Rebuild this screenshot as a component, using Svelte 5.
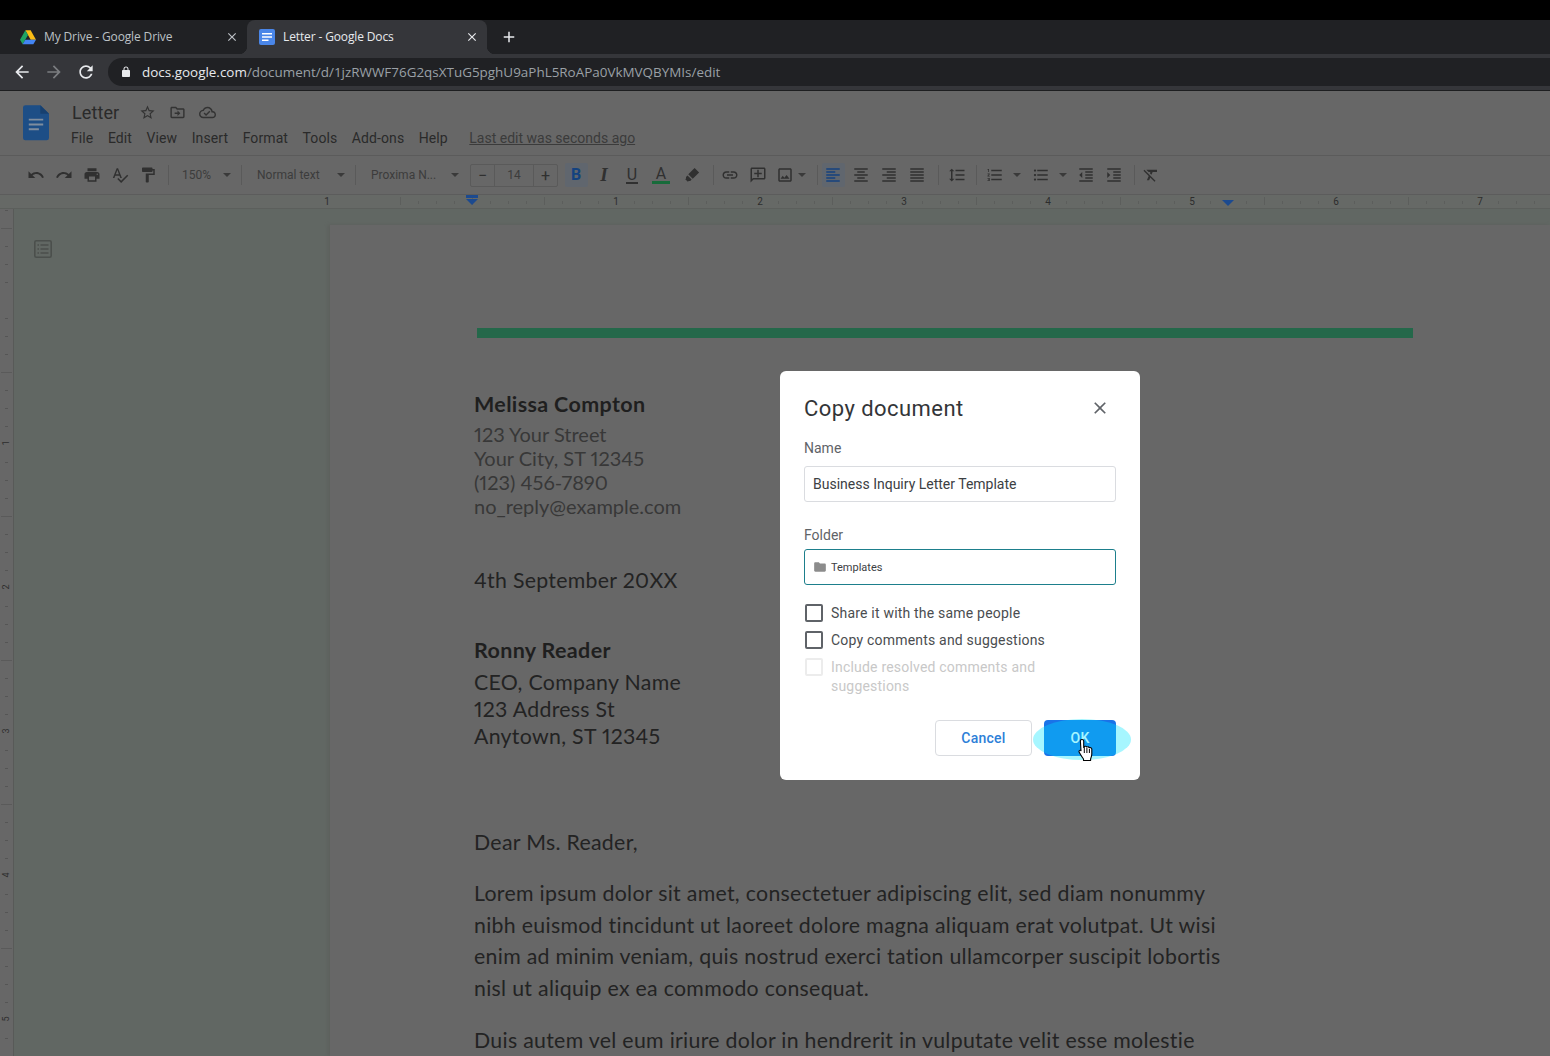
<script lang="ts">
	const icons: Record<string, string> = {
		undo: 'M12.5 8c-2.65 0-5.05.99-6.9 2.6L2 7v9h9l-3.62-3.62c1.39-1.16 3.16-1.88 5.12-1.88 3.54 0 6.55 2.31 7.6 5.5l2.37-.78C21.08 11.03 17.15 8 12.5 8z',
		redo: 'M18.4 10.6C16.55 8.99 14.15 8 11.5 8c-4.65 0-8.58 3.03-9.96 7.22L3.9 16c1.05-3.19 4.05-5.5 7.6-5.5 1.95 0 3.73.72 5.12 1.88L13 16h9V7l-3.6 3.6z',
		print: 'M19 8H5c-1.66 0-3 1.34-3 3v6h4v4h12v-4h4v-6c0-1.66-1.34-3-3-3zm-3 11H8v-5h8v5zm3-7c-.55 0-1-.45-1-1s.45-1 1-1 1 .45 1 1-.45 1-1 1zm-1-9H6v4h12V3z',
		spell: 'M12.45 16h2.09L9.43 3H7.57L2.46 16h2.09l1.12-3h5.64l1.14 3zm-6.02-5L8.5 5.48 10.57 11H6.43zm15.16.59l-8.09 8.09L9.83 16l-1.41 1.41 5.09 5.09L23 13l-1.41-1.41z',
		paint: 'M18 4V3c0-.55-.45-1-1-1H5c-.55 0-1 .45-1 1v4c0 .55.45 1 1 1h12c.55 0 1-.45 1-1V6h1v4H9v11c0 .55.45 1 1 1h2c.55 0 1-.45 1-1v-9h8V4h-3z',
		pen: 'M15.5 2.500l6 6-8.500 8.500-6-6zM6 12.500l5.500 5.500-2 2H7.500l-1 1-3.500-3.500 1-1V14.500z',
		link: 'M3.9 12c0-1.71 1.39-3.1 3.1-3.1h4V7H7c-2.76 0-5 2.24-5 5s2.24 5 5 5h4v-1.9H7c-1.71 0-3.1-1.39-3.1-3.1zM8 13h8v-2H8v2zm9-6h-4v1.9h4c1.71 0 3.1 1.39 3.1 3.1s-1.39 3.1-3.1 3.1h-4V17h4c2.76 0 5-2.24 5-5s-2.24-5-5-5z',
		comment: 'M2 4c0-1.1.9-2 2-2h16c1.1 0 2 .9 2 2v12c0 1.1-.9 2-2 2H6l-4 4V4zm2 13.17L5.17 16H20V4H4v13.17zM11 5h2v4h4v2h-4v4h-2v-4H7V9h4z',
		image: 'M19 5v14H5V5h14m0-2H5c-1.1 0-2 .9-2 2v14c0 1.1.9 2 2 2h14c1.1 0 2-.9 2-2V5c0-1.1-.9-2-2-2zm-4.86 8.86l-3 3.87L9 13.14 6 17h12l-3.86-5.14z',
		left: 'M3 3h18v2H3zM3 7h12v2H3zM3 11h18v2H3zM3 15h12v2H3zM3 19h18v2H3z',
		center: 'M3 3h18v2H3zM7 7h10v2H7zM3 11h18v2H3zM7 15h10v2H7zM3 19h18v2H3z',
		right: 'M3 3h18v2H3zM9 7h12v2H9zM3 11h18v2H3zM9 15h12v2H9zM3 19h18v2H3z',
		justify: 'M3 3h18v2H3zM3 7h18v2H3zM3 11h18v2H3zM3 15h18v2H3zM3 19h18v2H3z',
		spacing: 'M6 7h2.5L5 3.5 1.5 7H4v10H1.5L5 20.5 8.5 17H6V7zm4-2v2h12V5H10zm0 14h12v-2H10v2zm0-6h12v-2H10v2z',
		numbered: 'M2 17h2v.5H3v1h1v.5H2v1h3v-4H2v1zm1-9h1V4H2v1h1v3zm-1 3h1.8L2 13.1v.9h3v-1H3.2L5 10.9V10H2v1zm5-6v2h14V5H7zm0 14h14v-2H7v2zm0-6h14v-2H7v2z',
		bullets: 'M4 10.5c-.83 0-1.5.67-1.5 1.5s.67 1.5 1.5 1.5 1.5-.67 1.5-1.5-.67-1.5-1.5-1.5zm0-6c-.83 0-1.5.67-1.5 1.5S3.17 7.5 4 7.5 5.5 6.83 5.5 6 4.83 4.5 4 4.5zm0 12c-.83 0-1.5.68-1.5 1.5s.68 1.5 1.5 1.5 1.5-.68 1.5-1.5-.67-1.5-1.5-1.5zM7 19h14v-2H7v2zm0-6h14v-2H7v2zm0-8v2h14V5H7z',
		outdent: 'M11 17h10v-2H11v2zm-8-5l4 4V8l-4 4zm0 9h18v-2H3v2zM3 3v2h18V3H3zm8 6h10V7H11v2zm0 4h10v-2H11v2z',
		indent: 'M3 21h18v-2H3v2zM3 8v8l4-4-4-4zm8 9h10v-2H11v2zM3 3v2h18V3H3zm8 6h10V7H11v2zm0 4h10v-2H11v2z',
		clear: 'M3.27 5L2 6.27l6.97 6.97L6.5 19h3l1.57-3.66L16.73 21 18 19.73 3.55 5.27 3.27 5zM6 5v.18L8.82 8h2.4l-.72 1.68 2.1 2.1L14.21 8H20V5H6z',
		star: 'M22 9.24l-7.19-.62L12 2 9.19 8.63 2 9.24l5.46 4.73L5.82 21 12 17.27 18.18 21l-1.63-7.03L22 9.24zM12 15.4l-3.76 2.27 1-4.28-3.32-2.88 4.38-.38L12 6.1l1.71 4.04 4.38.38-3.32 2.88 1 4.28L12 15.4z',
		move: 'M20 6h-8l-2-2H4c-1.1 0-1.99.9-1.99 2L2 18c0 1.1.9 2 2 2h16c1.1 0 2-.9 2-2V8c0-1.1-.9-2-2-2zm0 12H4V6h5.17l2 2H20v10zm-8-4H8v-2h4V9l4 4-4 4v-3z',
		cloud: 'M19.35 10.04C18.67 6.59 15.64 4 12 4 9.11 4 6.6 5.64 5.35 8.04 2.34 8.36 0 10.91 0 14c0 3.31 2.69 6 6 6h13c2.76 0 5-2.24 5-5 0-2.64-2.05-4.78-4.65-4.96zM19 18H6c-2.21 0-4-1.79-4-4s1.79-4 4-4h.71C7.37 7.69 9.48 6 12 6c3.04 0 5.5 2.46 5.5 5.5v.5H19c1.66 0 3 1.34 3 3s-1.34 3-3 3zm-9-3.82l-2.09-2.09L6.5 13.5 10 17l6.01-6.01-1.41-1.41z',
		back: 'M20 11H7.83l5.59-5.59L12 4l-8 8 8 8 1.41-1.41L7.83 13H20v-2z',
		forward: 'M12 4l-1.41 1.41L16.17 11H4v2h12.17l-5.58 5.59L12 20l8-8z',
		refresh: 'M17.65 6.35C16.2 4.9 14.21 4 12 4c-4.42 0-7.99 3.58-7.99 8s3.57 8 7.99 8c3.73 0 6.84-2.55 7.73-6h-2.08c-.82 2.33-3.04 4-5.65 4-3.31 0-6-2.69-6-6s2.69-6 6-6c1.66 0 3.14.69 4.22 1.78L13 11h7V4l-2.35 2.35z',
		lock: 'M18 8h-1V6c0-2.76-2.24-5-5-5S7 3.24 7 6v2H6c-1.1 0-2 .9-2 2v10c0 1.1.9 2 2 2h12c1.1 0 2-.9 2-2V10c0-1.1-.9-2-2-2zM9 6c0-1.66 1.34-3 3-3s3 1.34 3 3v2H9V6z',
		close: 'M19 6.41L17.59 5 12 10.59 6.41 5 5 6.41 10.59 12 5 17.59 6.41 19 12 13.41 17.59 19 19 17.59 13.41 12z',
		plus: 'M19 13h-6v6h-2v-6H5v-2h6V5h2v6h6v2z',
		folder: 'M10 4H4c-1.1 0-2 .9-2 2v12c0 1.1.9 2 2 2h16c1.1 0 2-.9 2-2V8c0-1.1-.9-2-2-2h-8l-2-2z'
	};

	const menus = ['File', 'Edit', 'View', 'Insert', 'Format', 'Tools', 'Add-ons', 'Help'];

	type Tool = {
		type: 'icon' | 'sep' | 'select' | 'caret' | 'size' | 'letter';
		name?: string;
		label?: string;
		w?: number;
		ml?: number;
		pl?: number;
		pr?: number;
		active?: boolean;
	};

	const tools: Tool[] = [
		{ type: 'icon', name: 'undo' },
		{ type: 'icon', name: 'redo' },
		{ type: 'icon', name: 'print' },
		{ type: 'icon', name: 'spell' },
		{ type: 'icon', name: 'paint' },
		{ type: 'sep', ml: 6 },
		{ type: 'select', label: '150%', w: 72, pl: 13, pr: 10 },
		{ type: 'sep' },
		{ type: 'select', label: 'Normal text', w: 113, pl: 15, pr: 10 },
		{ type: 'sep' },
		{ type: 'select', label: 'Proxima N...', w: 111, pl: 15, pr: 8 },
		{ type: 'size', ml: 3 },
		{ type: 'letter', name: 'bold', label: 'B', ml: 4, active: true },
		{ type: 'letter', name: 'italic', label: 'I' },
		{ type: 'letter', name: 'under', label: 'U' },
		{ type: 'letter', name: 'color', label: 'A', ml: 1 },
		{ type: 'icon', name: 'pen', ml: 3 },
		{ type: 'sep', ml: 7 },
		{ type: 'icon', name: 'link', ml: 2 },
		{ type: 'icon', name: 'comment' },
		{ type: 'icon', name: 'image', w: 26 },
		{ type: 'caret', w: 10, ml: -1 },
		{ type: 'sep', ml: 10 },
		{ type: 'icon', name: 'left', ml: 1, active: true },
		{ type: 'icon', name: 'center' },
		{ type: 'icon', name: 'right' },
		{ type: 'icon', name: 'justify' },
		{ type: 'sep', ml: 7 },
		{ type: 'icon', name: 'spacing', ml: 4 },
		{ type: 'sep', ml: 5 },
		{ type: 'icon', name: 'numbered', ml: 4 },
		{ type: 'caret', w: 12, ml: 2 },
		{ type: 'icon', name: 'bullets', ml: 4 },
		{ type: 'caret', w: 12, ml: 2 },
		{ type: 'icon', name: 'outdent', ml: 3 },
		{ type: 'icon', name: 'indent' },
		{ type: 'sep', ml: 6 },
		{ type: 'icon', name: 'clear', ml: 2 }
	];

	// ruler marks: one inch is 144px, tick every eighth, zero of the horizontal ruler at x=472
	const hTicks = Array.from({ length: 70 }, (_, i) => i - 4)
		.map((i) => ({ x: 472 + i * 18, major: i % 4 === 0 }))
		.filter((t) => (t.x - 472) % 144 !== 0 || t.x === 472);
	const hNums = [
		{ n: 1, x: 327 },
		{ n: 1, x: 616 },
		{ n: 2, x: 760 },
		{ n: 3, x: 904 },
		{ n: 4, x: 1048 },
		{ n: 5, x: 1192 },
		{ n: 6, x: 1336 },
		{ n: 7, x: 1480 }
	];
	// the vertical ruler: long tick at every half inch between the numbers
	const vTicks = Array.from({ length: 47 }, (_, i) => ({ y: 1 + i * 18, major: i % 8 === 1 })).filter(
		(_, i) => i % 8 !== 5
	);
	const vNums = [1, 2, 3, 4, 5].map((n) => ({ n, y: 229 + (n - 1) * 144 }));
</script>

{#snippet icon(name: string, size = 18)}
	<svg width={size} height={size} viewBox="0 0 24 24" fill="currentColor"><path d={icons[name]} /></svg>
{/snippet}

<div class="screen">
	<div class="tabstrip">
		<div class="tab">
			<svg class="favicon" width="16" height="16" viewBox="0 0 24 24">
				<path d="M8 2h8l8 14h-8z" fill="#f9bc15" />
				<path d="M8 2L0 16l4 7 8-14z" fill="#1fa463" />
				<path d="M4 23h16l4-7H8z" fill="#4385f4" />
			</svg>
			<span class="tab-title">My Drive - Google Drive</span>
			{@render icon('close', 14)}
		</div>
		<div class="tab active">
			<svg class="favicon" width="16" height="16" viewBox="0 0 16 16">
				<rect width="16" height="16" rx="2" fill="#4a86e8" />
				<path d="M3 4h10v1.6H3zM3 7.2h10v1.6H3zM3 10.4h6.5V12H3z" fill="#fff" />
			</svg>
			<span class="tab-title">Letter - Google Docs</span>
			{@render icon('close', 14)}
		</div>
		<div class="newtab">{@render icon('plus', 18)}</div>
	</div>

	<div class="navbar">
		<span class="nav">{@render icon('back', 20)}</span>
		<span class="nav off">{@render icon('forward', 20)}</span>
		<span class="nav">{@render icon('refresh', 20)}</span>
		<div class="omnibox">
			<span class="lock">{@render icon('lock', 12)}</span>
			<span class="host">docs.google.com</span><span class="path">/document/d/1jzRWWF76G2qsXTuG5pghU9aPhL5RoAPa0VkMVQBYMIs/edit</span>
		</div>
	</div>

	<header class="docs-head">
		<svg class="docs-logo" width="26" height="36" viewBox="0 0 27 37">
			<path d="M2.5 0H18l9 9v25a2.5 2.5 0 0 1-2.5 2.5h-22A2.5 2.5 0 0 1 0 34V2.5A2.5 2.5 0 0 1 2.5 0z" fill="#1d4e86" />
			<path d="M18 0l9 9h-9z" fill="#17406f" />
			<path d="M6 14h15v2H6zM6 19h15v2H6zM6 24h10.500v2H6z" fill="#7f8d9e" />
		</svg>
		<div class="head-main">
			<div class="title-row">
				<span class="doc-title">Letter</span>
				<span class="title-icons">
					{@render icon('star', 17)}
					{@render icon('move', 17)}
					{@render icon('cloud', 17)}
				</span>
			</div>
			<div class="menu-row">
				{#each menus as menu}
					<span>{menu}</span>
				{/each}
				<span class="last-edit">Last edit was seconds ago</span>
			</div>
		</div>
	</header>

	<div class="toolbar">
		{#each tools as t}
			{#if t.type === 'sep'}
				<span class="sep" style:margin-left="{t.ml ?? 0}px"></span>
			{:else if t.type === 'select'}
				<span class="select" style:width="{t.w}px" style:padding-left="{t.pl}px" style:padding-right="{t.pr}px">
					<span>{t.label}</span><i class="caret"></i>
				</span>
			{:else if t.type === 'caret'}
				<span class="tool" style:width="{t.w}px" style:margin-left="{t.ml}px"><i class="caret"></i></span>
			{:else if t.type === 'size'}
				<span class="size" style:margin-left="{t.ml}px">
					<span class="size-btn">&minus;</span>
					<span class="size-val">14</span>
					<span class="size-btn">+</span>
				</span>
			{:else if t.type === 'letter'}
				<span class="tool" class:on={t.active} style:margin-left="{t.ml ?? 0}px">
					<span class="letter {t.name}">{t.label}</span>
				</span>
			{:else}
				<span class="tool" class:on={t.active} style:width="{t.w ?? 28}px" style:margin-left="{t.ml ?? 0}px">
					{@render icon(t.name ?? '')}
				</span>
			{/if}
		{/each}
	</div>

	<div class="hruler">
		{#each hTicks as t}
			<i class="htick" class:major={t.major} style:left="{t.x}px"></i>
		{/each}
		{#each hNums as t}
			<span class="hnum" style:left="{t.x}px">{t.n}</span>
		{/each}
		<i class="marker left-mark"></i>
		<i class="marker right-mark"></i>
	</div>

	<div class="workspace">
		<div class="vruler">
			{#each vTicks as t}
				<i class="vtick" class:major={t.major} style:top="{t.y}px"></i>
			{/each}
			{#each vNums as t}
				<span class="vnum" style:top="{t.y}px">{t.n}</span>
			{/each}
		</div>
		<div class="canvas">
			<aside class="outline-gutter">
				<svg width="20" height="20" viewBox="0 0 20 20" fill="none" stroke="#4b4f4c">
					<rect x="1.800" y="1.800" width="16.400" height="16.400" rx="1.500" stroke-width="1.600" />
					<path d="M4.500 6h1.500M7.500 6h8M4.500 10h1.500M7.500 10h8M4.500 14h1.500M7.500 14h8" stroke-width="1.500" />
				</svg>
			</aside>
			<main class="page">
				<div class="rule"></div>
				<h2 class="sender">Melissa Compton</h2>
				<p class="address">123 Your Street<br />Your City, ST 12345<br />(123) 456-7890<br />no_reply@example.com</p>
				<p class="date">4th September 20XX</p>
				<h2 class="recipient">Ronny Reader</h2>
				<p class="rcpt-lines">CEO, Company Name<br />123 Address St<br />Anytown, ST 12345</p>
				<p class="salute">Dear Ms. Reader,</p>
				<p class="body-text">Lorem ipsum dolor sit amet, consectetuer adipiscing elit, sed diam nonummy<br />nibh euismod tincidunt ut laoreet dolore magna aliquam erat volutpat. Ut wisi<br />enim ad minim veniam, quis nostrud exerci tation ullamcorper suscipit lobortis<br />nisl ut aliquip ex ea commodo consequat.</p>
				<p class="body-text">Duis autem vel eum iriure dolor in hendrerit in vulputate velit esse molestie</p>
			</main>
		</div>
	</div>

	<div class="dialog">
		<div class="dialog-head">
			<h1>Copy document</h1>
			<span class="dialog-close">{@render icon('close', 20)}</span>
		</div>
		<label class="field-label" for="copy-name">Name</label>
		<input id="copy-name" class="field" value="Business Inquiry Letter Template" />
		<div class="field-label folder-label">Folder</div>
		<div class="field folder">
			<span class="folder-icon">{@render icon('folder', 14)}</span>
			<span>Templates</span>
		</div>
		<div class="check first"><i class="box"></i><span>Share it with the same people</span></div>
		<div class="check"><i class="box"></i><span>Copy comments and suggestions</span></div>
		<div class="check disabled"><i class="box"></i><span>Include resolved comments and suggestions</span></div>
		<div class="actions">
			<button class="btn cancel">Cancel</button>
			<button class="btn ok">OK</button>
		</div>
		<div class="click-glow"></div>
		<svg class="hand" width="18" height="23" viewBox="0 0 18 23">
			<path d="M5 1.500c1 0 1.700.7 1.700 1.700v6.300l.6-.1V8.500c1-.6 2.200-.3 2.500.6.900-.6 2.200-.3 2.500.7 1-.5 2.400 0 2.500 1.200v5c0 2-.5 3.300-1.200 5v1.500H6.500V21c-1.200-1.500-3-4.500-4.300-6.800-.7-1.300.7-2.600 1.800-1.500l-.6-9.500C3.300 2.200 4 1.500 5 1.500z" fill="#fff" stroke="#000" stroke-width="1.100" stroke-linejoin="round" />
			<path d="M7.300 10v5M9.900 10v5M12.400 11v4" stroke="#000" stroke-width="1" />
		</svg>
	</div>
</div>

<style>
	:global(body) {
		margin: 0;
		background: #676767;
	}

	.screen {
		position: relative;
		width: 1550px;
		height: 1056px;
		overflow: hidden;
		display: flex;
		flex-direction: column;
		padding-top: 20px;
		box-sizing: border-box;
		background: #000;
		font-family: Roboto, 'Liberation Sans', sans-serif;
	}

	/* browser chrome */
	.tabstrip {
		display: flex;
		align-items: stretch;
		height: 34px;
		background: #202124;
		padding-left: 7px;
		flex: none;
	}

	.tab {
		position: relative;
		display: flex;
		align-items: center;
		width: 240px;
		box-sizing: border-box;
		padding: 0 8px 0 13px;
		color: #bdc1c6;
		font-family: 'Open Sans', sans-serif;
		font-size: 12px;
	}

	.tab.active {
		background: #35363a;
		border-radius: 8px 8px 0 0;
		color: #e8eaed;
		padding-left: 12px;
	}

	.tab.active::before,
	.tab.active::after {
		content: '';
		position: absolute;
		bottom: 0;
		width: 8px;
		height: 8px;
		background: radial-gradient(circle at 0 0, transparent 8px, #35363a 8.500px);
	}

	.tab.active::before {
		left: -8px;
	}

	.tab.active::after {
		right: -8px;
		background: radial-gradient(circle at 100% 0, transparent 8px, #35363a 8.500px);
	}

	.favicon {
		flex: none;
		margin-right: 8px;
	}

	.tab-title {
		flex: 1;
		white-space: nowrap;
		letter-spacing: -0.13px;
		margin-top: -1px;
	}

	.tab svg:last-child {
		flex: none;
	}

	.newtab {
		display: flex;
		align-items: center;
		margin-left: 13px;
		color: #e8eaed;
	}

	.navbar {
		display: flex;
		align-items: center;
		height: 36px;
		flex: none;
		background: #35363a;
		border-bottom: 1px solid #1d1e20;
		padding-left: 12px;
		color: #e8eaed;
	}

	.nav {
		display: flex;
		width: 32px;
		justify-content: flex-start;
	}

	.nav.off {
		color: #7b7d80;
	}

	.omnibox {
		flex: 1;
		display: flex;
		align-items: center;
		height: 28px;
		background: #202124;
		border-radius: 14px 0 0 14px;
		padding-left: 12px;
		font-family: 'Open Sans', sans-serif;
		font-size: 13.450px;
		white-space: nowrap;
	}

	.lock {
		display: flex;
		margin-right: 10px;
		color: #e8eaed;
	}

	.host {
		color: #e8eaed;
	}

	.path {
		color: #9aa0a6;
	}

	/* docs header */
	.docs-head {
		position: relative;
		display: flex;
		height: 65px;
		flex: none;
		box-sizing: border-box;
		background: #676767;
		border-bottom: 1px solid #5b5b5b;
		padding-left: 23px;
	}

	.docs-logo {
		margin-top: 14px;
	}

	.head-main {
		margin-left: 22px;
		color: #2a2a2a;
	}

	.title-row {
		display: flex;
		align-items: center;
		height: 22px;
		margin-top: 10px;
	}

	.doc-title {
		font-size: 18px;
		letter-spacing: 0.1px;
		margin-left: 1px;
	}

	.title-icons {
		display: flex;
		gap: 13px;
		margin-left: 20px;
		color: #333;
	}

	.menu-row {
		display: flex;
		align-items: center;
		gap: 14.500px;
		height: 20px;
		margin-top: 5px;
		font-size: 14px;
		letter-spacing: 0.1px;
	}

	.last-edit {
		margin-left: 7px;
		font-size: 14px;
		letter-spacing: 0;
		color: #3b3b3b;
		text-decoration: underline;
	}

	/* toolbar */
	.toolbar {
		display: flex;
		align-items: center;
		height: 39px;
		flex: none;
		box-sizing: border-box;
		background: #676767;
		border-bottom: 1px solid #5c5c5c;
		padding-left: 22px;
		color: #303030;
	}

	.tool {
		display: flex;
		align-items: center;
		justify-content: center;
		width: 28px;
		height: 24px;
		flex: none;
		position: relative;
	}

	.tool.on {
		color: #14427f;
	}

	.tool.on::before {
		content: '';
		position: absolute;
		inset: 0 2px 0 3px;
		background: #60666e;
		border-radius: 2px;
	}

	.tool.on > * {
		position: relative;
	}

	.sep {
		width: 1px;
		height: 20px;
		flex: none;
		background: #5a5a5a;
	}

	.select {
		display: flex;
		align-items: center;
		justify-content: space-between;
		flex: none;
		box-sizing: border-box;
		font-size: 12px;
		color: #3c3c3c;
		white-space: nowrap;
	}

	.caret {
		display: block;
		width: 0;
		height: 0;
		border-left: 4px solid transparent;
		border-right: 4px solid transparent;
		border-top: 4px solid #3a3a3a;
	}

	.size {
		display: flex;
		align-items: stretch;
		width: 88px;
		height: 23px;
		flex: none;
		box-sizing: border-box;
		border: 1px solid #5a5a5a;
		border-radius: 2px;
		color: #303030;
	}

	.size-btn {
		width: 23px;
		flex: none;
		text-align: center;
		font-size: 16px;
		line-height: 21px;
	}

	.size-val {
		flex: 1;
		text-align: center;
		font-size: 12px;
		line-height: 21px;
		color: #3c3c3c;
		border-left: 1px solid #5a5a5a;
		border-right: 1px solid #5a5a5a;
	}

	.letter {
		font-family: Roboto, sans-serif;
		font-size: 16px;
		line-height: 18px;
	}

	.letter.bold {
		font-weight: 700;
	}

	.letter.italic {
		font-family: 'Liberation Serif', serif;
		font-style: italic;
		font-weight: 700;
		font-size: 19px;
	}

	.letter.under {
		border-bottom: 2px solid currentColor;
		line-height: 15px;
		padding: 0 1px;
	}

	.letter.color {
		border-bottom: 3px solid #176b3a;
		line-height: 15px;
		padding: 0 4px;
	}

	/* rulers */
	.hruler {
		position: relative;
		height: 13px;
		flex: none;
		background: #666966;
		border-bottom: 1px solid #5c5f5c;
		font-size: 10px;
		color: #2d2d2d;
	}

	.htick {
		position: absolute;
		top: 6px;
		width: 1px;
		height: 3px;
		background: #5c5e5c;
	}

	.htick.major {
		top: 2px;
		height: 8px;
	}

	.hnum {
		position: absolute;
		top: 1px;
		transform: translateX(-50%);
		line-height: 12px;
	}

	.marker {
		position: absolute;
		top: 2px;
		width: 0;
		height: 0;
		border-left: 6px solid transparent;
		border-right: 6px solid transparent;
		border-top: 6px solid #1c4a8f;
	}

	.left-mark {
		left: 466px;
		top: 4px;
	}

	.left-mark::before {
		content: '';
		position: absolute;
		left: -6px;
		top: -10px;
		width: 12px;
		height: 3px;
		background: #1c4a8f;
	}

	.right-mark {
		left: 1222px;
		top: 5px;
	}

	.workspace {
		flex: 1;
		display: flex;
		min-height: 0;
	}

	.vruler {
		position: relative;
		width: 13px;
		flex: none;
		background: #676767;
		border-right: 1px solid #585a58;
		font-size: 9px;
		color: #2d2d2d;
	}

	.vtick {
		position: absolute;
		left: 5px;
		width: 3px;
		height: 1px;
		background: #555;
	}

	.vtick.major {
		left: 1px;
		width: 11px;
		background: #5a5a5a;
	}

	.vnum {
		position: absolute;
		left: 3px;
		transform: rotate(-90deg);
		line-height: 10px;
	}

	.canvas {
		flex: 1;
		display: flex;
		min-width: 0;
		background: #616763;
		padding-top: 16px;
	}

	.outline-gutter {
		width: 316px;
		flex: none;
		box-sizing: border-box;
		padding: 14px 0 0 19px;
	}

	/* document page */
	.page {
		flex: 1;
		background: #676767;
		box-shadow: -2px 0 3px #5d605d;
		padding: 103px 0 0 144px;
		font-family: Lato, 'Open Sans', sans-serif;
		font-feature-settings: 'pnum';
		color: #232323;
		white-space: nowrap;
	}

	.page p,
	.page h2 {
		margin: 0;
		font-weight: 400;
	}

	.rule {
		width: 936px;
		height: 10px;
		margin-left: 3px;
		background: #24684a;
		margin-bottom: 52px;
	}

	.page .sender,
	.page .recipient {
		font-size: 21.500px;
		font-weight: 700;
		line-height: 28px;
		letter-spacing: 0.35px;
		color: #1f1f1f;
	}

	.page .address {
		font-size: 20px;
		line-height: 24px;
		color: #383838;
		margin-top: 4px;
	}

	.page .date {
		font-size: 21.300px;
		line-height: 30px;
		letter-spacing: 0.3px;
		margin-top: 47px;
	}

	.page .recipient {
		margin-top: 41px;
	}

	.page .rcpt-lines {
		font-size: 21.300px;
		line-height: 27px;
		letter-spacing: 0.3px;
		margin-top: 5px;
	}

	.page .salute {
		font-size: 21.300px;
		line-height: 30px;
		letter-spacing: 0.3px;
		margin-top: 77px;
	}

	.page .body-text {
		font-size: 21.300px;
		line-height: 31.500px;
		letter-spacing: 0.3px;
		margin-top: 21px;
	}

	/* copy dialog */
	.dialog {
		position: absolute;
		left: 780px;
		top: 371px;
		width: 360px;
		height: 409px;
		box-sizing: border-box;
		padding: 0 24px;
		background: #fff;
		border-radius: 6px;
		color: #3c4043;
		font-size: 14px;
	}

	.dialog-head {
		display: flex;
		align-items: center;
		justify-content: space-between;
		height: 32px;
		padding-top: 21px;
		margin-bottom: 15px;
	}

	.dialog-head h1 {
		margin: 0;
		font-size: 22px;
		font-weight: 400;
		letter-spacing: 0.45px;
		color: #333538;
	}

	.dialog-close {
		display: flex;
		margin-right: 6px;
		color: #5f6368;
	}

	.field-label {
		display: block;
		font-size: 14px;
		line-height: 18px;
		color: #5f6368;
	}

	.field {
		display: flex;
		align-items: center;
		width: 312px;
		height: 36px;
		box-sizing: border-box;
		margin-top: 9px;
		padding: 0 8px;
		border: 1px solid #dadce0;
		border-radius: 3px;
		font-family: inherit;
		font-size: 14px;
		color: #3c4043;
		outline: none;
	}

	.folder-label {
		margin-top: 24px;
	}

	.folder {
		margin-top: 5px;
		border-color: #1d7f8c;
		font-size: 11px;
	}

	.folder-icon {
		display: flex;
		margin-right: 4px;
		color: #8c8c8c;
	}

	.check {
		display: flex;
		align-items: flex-start;
		width: 290px;
		margin-top: 8px;
		line-height: 19px;
		letter-spacing: 0.2px;
		color: #4a4d50;
	}

	.check.first {
		margin-top: 19px;
	}

	.box {
		display: block;
		width: 18px;
		height: 18px;
		flex: none;
		box-sizing: border-box;
		margin: 0 8px 0 1px;
		border: 2px solid #5f6368;
		border-radius: 2px;
	}

	.check.disabled {
		color: #c8c8c8;
	}

	.check.disabled .box {
		border-color: #ececec;
	}

	.actions {
		display: flex;
		justify-content: flex-end;
		gap: 12px;
		margin-top: 24px;
	}

	.btn {
		height: 36px;
		box-sizing: border-box;
		border-radius: 4px;
		font-family: inherit;
		font-size: 14px;
		font-weight: 500;
		letter-spacing: 0.25px;
		padding: 0;
	}

	.cancel {
		width: 97px;
		background: #fff;
		border: 1px solid #dadce0;
		color: #2d7fd8;
	}

	.ok {
		width: 72px;
		background: #1a73e8;
		border: none;
		color: #fff;
	}

	.click-glow {
		position: absolute;
		left: 253px;
		top: 348px;
		width: 98px;
		height: 41px;
		border-radius: 50%;
		background: rgba(0, 230, 255, 0.35);
	}

	.hand {
		position: absolute;
		left: 297px;
		top: 367px;
	}
</style>
